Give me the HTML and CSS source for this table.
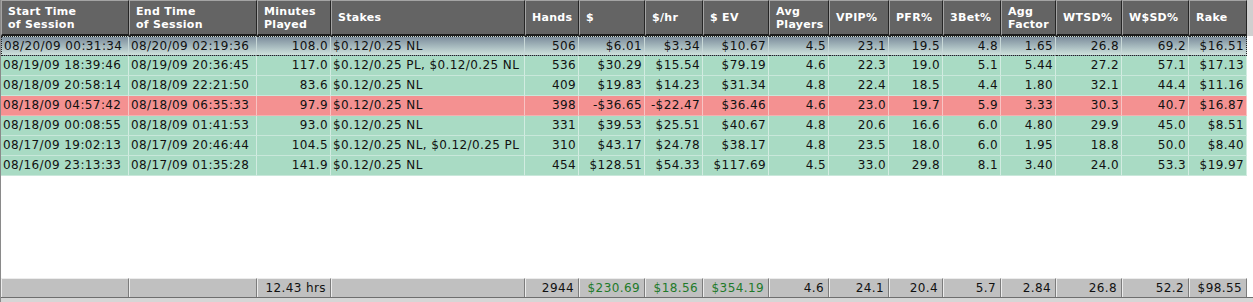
FILE: index.html
```html
<!DOCTYPE html>
<html>
<head>
<meta charset="utf-8">
<link rel="stylesheet" href="styles.css">
</head>
<body>
<div class="grid">
  <table class="data">
    <colgroup>
      <col class="c1"><col class="c2"><col class="c3"><col class="c4"><col class="c5"><col class="c6"><col class="c7"><col class="c8"><col class="c9"><col class="c10"><col class="c11"><col class="c12"><col class="c13"><col class="c14"><col class="c15"><col class="c16"><col class="cx">
    </colgroup>
    <thead>
      <tr>
        <th>Start Time<br>of Session</th>
        <th>End Time<br>of Session</th>
        <th>Minutes<br>Played</th>
        <th>Stakes</th>
        <th>Hands</th>
        <th>$</th>
        <th>$/hr</th>
        <th>$ EV</th>
        <th>Avg<br>Players</th>
        <th>VPIP%</th>
        <th>PFR%</th>
        <th>3Bet%</th>
        <th>Agg<br>Factor</th>
        <th>WTSD%</th>
        <th>W$SD%</th>
        <th>Rake</th>
        <th class="fill"></th>
      </tr>
    </thead>
    <tbody>
      <tr class="sel">
        <td class="l">08/20/09 00:31:34</td><td class="l">08/20/09 02:19:36</td><td>108.0</td><td class="l">$0.12/0.25 NL</td><td>506</td><td>$6.01</td><td>$3.34</td><td>$10.67</td><td>4.5</td><td>23.1</td><td>19.5</td><td>4.8</td><td>1.65</td><td>26.8</td><td>69.2</td><td>$16.51</td><td class="fill"></td>
      </tr>
      <tr>
        <td class="l">08/19/09 18:39:46</td><td class="l">08/19/09 20:36:45</td><td>117.0</td><td class="l">$0.12/0.25 PL, $0.12/0.25 NL</td><td>536</td><td>$30.29</td><td>$15.54</td><td>$79.19</td><td>4.6</td><td>22.3</td><td>19.0</td><td>5.1</td><td>5.44</td><td>27.2</td><td>57.1</td><td>$17.13</td><td class="fill"></td>
      </tr>
      <tr>
        <td class="l">08/18/09 20:58:14</td><td class="l">08/18/09 22:21:50</td><td>83.6</td><td class="l">$0.12/0.25 NL</td><td>409</td><td>$19.83</td><td>$14.23</td><td>$31.34</td><td>4.8</td><td>22.4</td><td>18.5</td><td>4.4</td><td>1.80</td><td>32.1</td><td>44.4</td><td>$11.16</td><td class="fill"></td>
      </tr>
      <tr class="loss">
        <td class="l">08/18/09 04:57:42</td><td class="l">08/18/09 06:35:33</td><td>97.9</td><td class="l">$0.12/0.25 NL</td><td>398</td><td>-$36.65</td><td>-$22.47</td><td>$36.46</td><td>4.6</td><td>23.0</td><td>19.7</td><td>5.9</td><td>3.33</td><td>30.3</td><td>40.7</td><td>$16.87</td><td class="fill"></td>
      </tr>
      <tr>
        <td class="l">08/18/09 00:08:55</td><td class="l">08/18/09 01:41:53</td><td>93.0</td><td class="l">$0.12/0.25 NL</td><td>331</td><td>$39.53</td><td>$25.51</td><td>$40.67</td><td>4.8</td><td>20.6</td><td>16.6</td><td>6.0</td><td>4.80</td><td>29.9</td><td>45.0</td><td>$8.51</td><td class="fill"></td>
      </tr>
      <tr>
        <td class="l">08/17/09 19:02:13</td><td class="l">08/17/09 20:46:44</td><td>104.5</td><td class="l">$0.12/0.25 NL, $0.12/0.25 PL</td><td>310</td><td>$43.17</td><td>$24.78</td><td>$38.17</td><td>4.8</td><td>23.5</td><td>18.0</td><td>6.0</td><td>1.95</td><td>18.8</td><td>50.0</td><td>$8.40</td><td class="fill"></td>
      </tr>
      <tr>
        <td class="l">08/16/09 23:13:33</td><td class="l">08/17/09 01:35:28</td><td>141.9</td><td class="l">$0.12/0.25 NL</td><td>454</td><td>$128.51</td><td>$54.33</td><td>$117.69</td><td>4.5</td><td>33.0</td><td>29.8</td><td>8.1</td><td>3.40</td><td>24.0</td><td>53.3</td><td>$19.97</td><td class="fill"></td>
      </tr>
    </tbody>
  </table>
  <div class="empty"></div>
  <table class="totals">
    <colgroup>
      <col class="c1"><col class="c2"><col class="c3"><col class="c4"><col class="c5"><col class="c6"><col class="c7"><col class="c8"><col class="c9"><col class="c10"><col class="c11"><col class="c12"><col class="c13"><col class="c14"><col class="c15"><col class="c16"><col class="cx">
    </colgroup>
    <tr>
      <td></td><td></td><td>12.43 hrs</td><td></td><td>2944</td><td class="pos">$230.69</td><td class="pos">$18.56</td><td class="pos">$354.19</td><td>4.6</td><td>24.1</td><td>20.4</td><td>5.7</td><td>2.84</td><td>26.8</td><td>52.2</td><td>$98.55</td><td class="fill"></td>
    </tr>
  </table>
  <div class="bottom"></div>
</div>
</body>
</html>
```
FILE: styles.css
```css
html, body {
  margin: 0;
  padding: 0;
  background: #ffffff;
}

.grid {
  width: 1253px;
  height: 302px;
  display: flex;
  flex-direction: column;
  font-family: "DejaVu Sans", Verdana, sans-serif;
  font-size: 12px;
  color: #111;
  border-left: 1px solid #8a8a8a;
  box-sizing: border-box;
}

table {
  border-collapse: separate;
  border-spacing: 0;
  table-layout: fixed;
  width: 1252px;
}

col.c1 { width: 128px; }
col.c2 { width: 128px; }
col.c3 { width: 74px; }
col.c4 { width: 194px; }
col.c5 { width: 54px; }
col.c6 { width: 66px; }
col.c7 { width: 58px; }
col.c8 { width: 66px; }
col.c9 { width: 60px; }
col.c10 { width: 60px; }
col.c11 { width: 54px; }
col.c12 { width: 58px; }
col.c13 { width: 55px; }
col.c14 { width: 66px; }
col.c15 { width: 67px; }
col.c16 { width: 58px; }
col.cx { width: 6px; }

th {
  height: 33px;
  padding: 0 0 0 6px;
  background: #646464;
  color: #ffffff;
  font-weight: bold;
  font-size: 11px;
  line-height: 13px;
  text-align: left;
  white-space: nowrap;
  overflow: hidden;
  border-top: 1px solid #a4a4a4;
  border-left: 1px solid #a4a4a4;
  border-right: 1px solid #262626;
  border-bottom: 2px solid #1e1e1e;
  letter-spacing: 0.3px;
}

th.fill {
  background: #cfcfcf;
  border: none;
  padding: 0;
}

.data td {
  height: 19px;
  padding: 0 2px 0 2px;
  text-align: right;
  white-space: nowrap;
  overflow: hidden;
  background: #a9dbc4;
  border-right: 1px solid #d2ece1;
  border-bottom: 1px solid #c9e7da;
  line-height: 19px;
  letter-spacing: 0.4px;
}

.data td.l {
  text-align: left;
}

.data td.fill {
  background: #ffffff;
  border: none;
}

.data tr.sel td {
  background: linear-gradient(#7d8d9c, #a9bcc0 55%, #cfe2dc);
  border-top: 1px dotted #222;
  border-bottom: 1px dotted #222;
  border-right: 1px solid #c8d8d8;
  height: 18px;
  line-height: 18px;
}

.data tr.sel td:first-child {
  border-left: 1px dotted #222;
}

.data tr.sel td:nth-child(16) {
  border-right: 1px dotted #222;
}

.data tr.sel td.fill {
  background: #ffffff;
  border: none;
}

.data tr.loss td {
  background: #f49191;
  border-right: 1px solid #f8c4c4;
  border-bottom: 1px solid #f4b0b0;
}

.data tr.loss td.fill {
  background: #ffffff;
  border: none;
}

.empty {
  flex: 1;
  background: #ffffff;
}

.totals td {
  height: 18px;
  padding: 0 4px 0 2px;
  text-align: right;
  white-space: nowrap;
  overflow: hidden;
  background: #c0c0c0;
  border-top: 1px solid #ececec;
  border-left: 1px solid #ececec;
  border-right: 1px solid #7c7c7c;
  line-height: 18px;
  letter-spacing: 0.4px;
}

.totals td.pos {
  color: #1f7a2a;
}

.totals td.fill {
  background: #ffffff;
  border: none;
}

.bottom {
  height: 4px;
  border-top: 1px solid #6e6e6e;
  background: #d6d6d6;
}
```
